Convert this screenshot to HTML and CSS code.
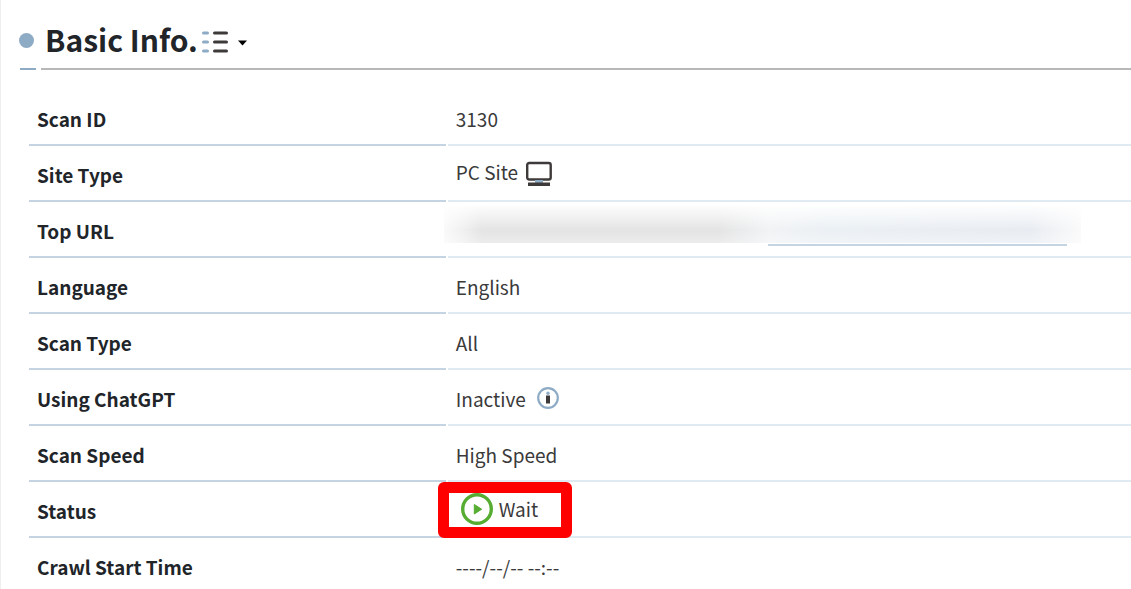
FILE: index.html
```html
<!DOCTYPE html>
<html lang="en">
<head>
    <meta charset="UTF-8">
    <meta name="viewport" content="width=device-width, initial-scale=1.0">
    <title>Basic Info.</title>
    <link rel="stylesheet" href="styles.css">
</head>
<body>
    <main class="panel">
        <header class="section-header">
            <span class="dot"></span>
            <h1>Basic Info.</h1>
            <button type="button" class="menu-button" aria-label="Section menu">
                <svg width="48" height="24" viewBox="0 0 48 24">
                    <g stroke-width="3" stroke-linecap="round">
                        <path stroke="#8eabc6" d="M2.500 3h4M2.500 12h4M2.500 21h4"/>
                        <path stroke="#3e3a39" d="M13.500 3h12M13.500 12h12M13.500 21h12"/>
                    </g>
                    <path fill="#000" d="M37 10.500h9l-4.500 5z"/>
                </svg>
            </button>
        </header>
        <div class="section-line"></div>

        <table class="info-table">
            <tr>
                <th scope="row">Scan ID</th>
                <td>3130</td>
            </tr>
            <tr>
                <th scope="row">Site Type</th>
                <td>
                    <div class="value site">
                        <span>PC Site</span>
                        <svg width="28" height="26" viewBox="0 0 28 26">
                            <rect x="2.200" y="2" width="23.500" height="16.500" rx="2" fill="#fff" stroke="#3e3a39" stroke-width="2.400"/>
                            <path fill="#8eabc6" d="M10 19h8v3h-8z"/>
                            <path fill="#3e3a39" d="M3 21.500h22v3.500H3z"/>
                        </svg>
                    </div>
                </td>
            </tr>
            <tr>
                <th scope="row">Top URL</th>
                <td class="url-cell">
                    <div class="masked">
                        <a href="#" class="masked-link" aria-label="Top URL"></a>
                    </div>
                </td>
            </tr>
            <tr>
                <th scope="row">Language</th>
                <td>English</td>
            </tr>
            <tr>
                <th scope="row">Scan Type</th>
                <td>All</td>
            </tr>
            <tr>
                <th scope="row">Using ChatGPT</th>
                <td>
                    <div class="value chatgpt">
                        <span>Inactive</span>
                        <svg width="22" height="22" viewBox="0 0 22 22">
                            <circle cx="11" cy="11" r="9.800" fill="#fff" stroke="#8eabc6" stroke-width="2.200"/>
                            <circle cx="11" cy="6.300" r="1.700" fill="#8eabc6"/>
                            <path fill="#3e3a39" d="M9 8.500h4v8H9z"/>
                        </svg>
                    </div>
                </td>
            </tr>
            <tr>
                <th scope="row">Scan Speed</th>
                <td>High Speed</td>
            </tr>
            <tr>
                <th scope="row">Status</th>
                <td class="status-cell">
                    <div class="value status">
                        <svg width="32" height="32" viewBox="0 0 32 32">
                            <circle cx="16" cy="16" r="14.300" fill="#fff" stroke="#56ad32" stroke-width="3.400"/>
                            <path fill="#56ad32" stroke="#56ad32" stroke-linejoin="round" d="M13.300 11.500v9.500l7.400-4.800z"/>
                        </svg>
                        <span>Wait</span>
                    </div>
                    <div class="highlight"></div>
                </td>
            </tr>
            <tr>
                <th scope="row">Crawl Start Time</th>
                <td>----/--/-- --:--</td>
            </tr>
        </table>
    </main>
</body>
</html>
```

FILE: styles.css
```css
body {
    margin: 0;
    background-color: #fff;
    color: #3a3a3a;
    font-family: "Noto Sans CJK JP", "Noto Sans", sans-serif;
    font-size: 19px;
    line-height: 28px;
}
.panel {
    border-left: 1px solid #eee;
}
.section-header {
    display: flex;
    align-items: center;
    height: 48px;
    padding: 16px 0 4px 18px;
}
.dot {
    width: 15px;
    height: 15px;
    margin-right: 11px;
    border-radius: 50%;
    background-color: #8eabc6;
}
h1 {
    margin: 0 0 2px;
    color: #212529;
    font-size: 30px;
    line-height: 46px;
}
.menu-button {
    display: flex;
    margin: 4px 0 0 3px;
    padding: 0;
    border: 0;
    background: none;
    cursor: pointer;
}
.section-line {
    display: flex;
    gap: 5px;
    margin-left: 19px;
}
.section-line::before {
    content: "";
    width: 16px;
    height: 2px;
    background-color: #8eabc6;
}
.section-line::after {
    content: "";
    flex: 1;
    height: 2px;
    background-color: #b8b8b8;
}
.info-table {
    width: calc(100% - 28px);
    margin: 20px 0 0 28px;
    border-collapse: separate;
    border-spacing: 0;
    table-layout: fixed;
}
th, td {
    box-sizing: border-box;
    height: 56px;
    padding: 2px 8px 0;
    text-align: left;
    vertical-align: middle;
}
th {
    width: 38%;
    color: #212529;
    background: linear-gradient(#c5d4e2, #c5d4e2) left bottom / calc(100% - 2px) 2px no-repeat;
}
td {
    background: linear-gradient(#dfeaf3, #dfeaf3) left bottom / 100% 2px no-repeat;
}
.value {
    display: flex;
    align-items: center;
}
.site {
    gap: 7px;
    margin-bottom: 6px;
}
.site svg {
    margin-top: 4px;
}
.chatgpt {
    gap: 11px;
}
.chatgpt svg {
    margin-bottom: 2px;
}
.status {
    gap: 6px;
    margin-bottom: 4px;
    padding-left: 5px;
}
.url-cell {
    padding: 4px 0 0;
    vertical-align: top;
}
.masked {
    box-sizing: border-box;
    width: 637px;
    max-width: 100%;
    height: 40px;
    margin-left: -4px;
    padding-left: 324px;
    background:
        linear-gradient(rgba(255, 255, 255, 0.9), rgba(255, 255, 255, 0) 65%, rgba(255, 255, 255, 0.3)) top / 100% 37px no-repeat,
        linear-gradient(90deg, #fafafa, #f0f0f0 3%, #e4e4e4 6%, #e4e4e4 43%, #f1f3f5 51%, #ebf0f4 60%, #e8ecf2 92%, #fafafa) top / 100% 37px no-repeat;
}
.masked-link {
    display: block;
    box-sizing: border-box;
    width: 299px;
    height: 40px;
    border-bottom: 2px solid #c5d4e2;
}
.status-cell {
    position: relative;
}
/* frame around the current status, overlaps the row borders */
.highlight {
    position: absolute;
    top: 0;
    left: -10px;
    box-sizing: border-box;
    width: 134px;
    height: 56px;
    border: 11px solid #f00;
    border-radius: 6px;
}
```
